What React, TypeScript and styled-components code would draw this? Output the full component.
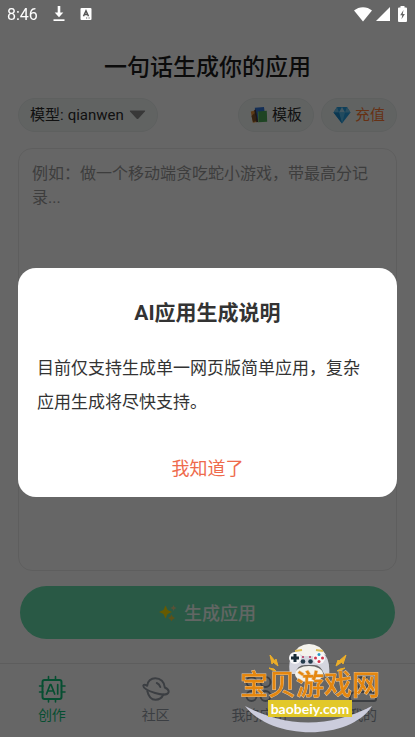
import React from "react";
import styled, { createGlobalStyle } from "styled-components";

const GlobalStyle = createGlobalStyle`
  *, *::before, *::after { box-sizing: border-box; }
  body { margin: 0; background: #fff; font-family: Roboto, "Noto Sans CJK SC", sans-serif; }
  button, select, textarea { font: inherit; color: inherit; }
`;

const Screen = styled.div`
  min-height: 100vh;
  display: flex;
  flex-direction: column;
`;

const StatusBar = styled.header`
  position: relative;
  z-index: 3;
  height: 28px;
  padding: 0 8px 0 7px;
  display: flex;
  align-items: center;
  justify-content: space-between;
  color: #fff;
  font-size: 16px;
`;

const StatusGroup = styled.div<{ $gap: number }>`
  display: flex;
  align-items: center;
  gap: ${(p) => p.$gap}px;
`;

const Clock = styled.time`
  line-height: 28px;
  padding-top: 1px;
`;

const Main = styled.main`
  flex: 1;
  display: flex;
  flex-direction: column;
  padding: 22px 18px 24px;
`;

const PageTitle = styled.h1`
  margin: 0;
  font-size: 23px;
  line-height: 36px;
  font-weight: 500;
  text-align: center;
  color: #1c1c1c;
`;

const Toolbar = styled.div`
  display: flex;
  align-items: center;
  gap: 7px;
  margin: 12px 0 16px;
`;

const chip = `
  height: 34px;
  border: 1px solid #eaf0ee;
  border-radius: 17px;
  background: #f3f8f6;
  font-size: 15px;
  line-height: 22px;
`;

const ModelChip = styled.label`
  ${chip}
  display: flex;
  align-items: center;
  gap: 4px;
  padding: 0 11px;
  margin-right: auto;
  color: #2b2b2b;
`;

const ModelSelect = styled.select`
  appearance: none;
  border: 0;
  padding: 0;
  background: transparent;
  line-height: 22px;
`;

const ChipButton = styled.button<{ $accent?: boolean }>`
  ${chip}
  display: flex;
  align-items: center;
  gap: 4px;
  padding: 0 11px;
  color: ${(p) => (p.$accent ? "#ff7a35" : "#2b2b2b")};
`;

const Prompt = styled.textarea`
  flex: 1;
  width: 100%;
  padding: 13px;
  border: 1px solid #ececec;
  border-radius: 14px;
  background: transparent;
  resize: none;
  outline: none;
  font-size: 16px;
  line-height: 24px;
  &::placeholder { color: #9a9a9a; opacity: 1; }
`;

const GenerateButton = styled.button`
  display: flex;
  align-items: center;
  justify-content: center;
  gap: 7px;
  height: 53px;
  margin: 15px 2px 0;
  padding-bottom: 2px;
  border: 0;
  border-radius: 27px;
  background: #67dfac;
  color: #f4fff9;
  font-size: 18px;
  font-weight: 500;
`;

const TabBar = styled.nav`
  display: grid;
  grid-template-columns: repeat(4, 1fr);
  height: 74px;
  padding-top: 11px;
  border-top: 1px solid #e8e8e8;
`;

const Tab = styled.a<{ $active?: boolean }>`
  display: flex;
  flex-direction: column;
  align-items: center;
  gap: 1px;
  color: ${(p) => (p.$active ? "#10c47c" : "#959ca6")};
  font-size: 14px;
  line-height: 22px;
  text-decoration: none;
`;

const Overlay = styled.div`
  position: fixed;
  inset: 0;
  z-index: 2;
  display: flex;
  align-items: center;
  padding: 28px 18px 0;
  background: rgba(0, 0, 0, 0.6);
`;

const Dialog = styled.section`
  width: 100%;
  padding: 29px 28px 11px 19px;
  border-radius: 18px;
  background: #fff;
  color: #333;
  display: flex;
  flex-direction: column;
`;

const DialogTitle = styled.h2`
  margin: 0 -9px 22px 0;
  font-size: 21px;
  line-height: 32px;
  font-weight: 700;
  text-align: center;
`;

const DialogText = styled.p`
  margin: 0 0 33px;
  font-size: 17px;
  line-height: 34px;
`;

const DialogAction = styled.button`
  margin-right: -9px;
  align-self: center;
  border: 0;
  padding: 0 16px;
  background: transparent;
  color: #ee6a4c;
  font-size: 18px;
  line-height: 34px;
`;

const Watermark = styled.aside`
  position: fixed;
  right: 33px;
  bottom: 4px;
  z-index: 4;
  width: 144px;
  height: 90px;
  padding-top: 29px;
  display: flex;
  flex-direction: column;
  align-items: center;
  pointer-events: none;
`;

const WatermarkArt = styled.svg`
  position: absolute;
  inset: 0;
`;

const WatermarkName = styled.strong`
  position: relative;
  font-size: 28px;
  line-height: 28px;
  font-weight: 500;
  color: #e5870f;
  white-space: nowrap;
  paint-order: stroke;
  -webkit-text-stroke: 1px #eac596;
`;

const WatermarkSite = styled.span`
  position: relative;
  padding: 0 3px;
  background: #e2c829;
  color: #fff;
  font-family: Lato, sans-serif;
  font-weight: 700;
  font-size: 14px;
  line-height: 17px;
`;

const DownloadIcon = () => (
  <svg width="12" height="16" viewBox="0 0 12 16" fill="#fff" aria-hidden="true">
    <path d="M4.700 0h2.600v6.500h3L6 11.200 1.700 6.500h3z" />
    <path d="M.5 13.300h11v1.700H.5z" />
  </svg>
);

const InputIcon = () => (
  <svg width="12" height="12" viewBox="0 0 12 12" aria-hidden="true">
    <rect x=".5" width="11" height="12" rx="1" fill="#fff" />
    <path d="M3.500 8.200 6 2.700l2.500 5.500M4.400 6.500h3.200" fill="none" stroke="#555" strokeWidth="1.500" />
    <path d="M6 10h1.200M8.500 10h1.200" stroke="#666" />
  </svg>
);

const WifiIcon = () => (
  <svg width="18" height="15" viewBox="0 0 18 15" fill="#fff" aria-hidden="true">
    <path d="M0 3.600C5-1 13-1 18 3.600L9 14.600z" />
  </svg>
);

const SignalIcon = () => (
  <svg width="14" height="14" viewBox="0 0 14 14" fill="#fff" aria-hidden="true">
    <path d="M14 0v14H0z" />
  </svg>
);

const BatteryIcon = () => (
  <svg width="9" height="16" viewBox="0 0 9 16" aria-hidden="true">
    <path d="M2.500 0h4v1.500H8q1 0 1 1V15q0 1-1 1H1q-1 0-1-1V2.500q0-1 1-1h1.500z" fill="#fff" />
    <path d="M5.500 4 2.200 9.300h2L3.500 13.300 6.900 8H4.800z" fill="#666" />
  </svg>
);

const CaretIcon = () => (
  <svg width="17" height="10" viewBox="0 0 17 10" aria-hidden="true">
    <path d="M1.500.5h14q1.200 0 .4 1L9.300 8.700q-.8.800-1.600 0L1 1.500q-.6-1 .5-1z" fill="#8d8d8d" />
  </svg>
);

const TemplateIcon = () => (
  <svg width="18" height="18" viewBox="0 0 18 18" aria-hidden="true">
    <path d="m.8 5.500 5-1.200 2.500 11.500-5.500 1z" fill="#e8953a" />
    <path d="m1.500 10 3-3 2 8-3.500 1z" fill="#84552a" />
    <path d="m4.800 1.800 9.200-.9 1.500 12-9.200 1.500z" fill="#3475d8" />
    <path d="m4.200 4 1.600-.4L8.200 16l-1.800.3z" fill="#4a3a38" />
    <path d="m7.800 5.500 9-.8.400 11-8.900.5z" fill="#4dab57" />
    <path d="m7.800 5.500.7-.1.500 10.800h-.7z" fill="#87cb84" />
  </svg>
);

const DiamondIcon = () => (
  <svg width="18" height="18" viewBox="0 0 18 18" aria-hidden="true">
    <path d="M4 1h10l3.500 5.500L9 17.500.5 6.500z" fill="#269fe0" />
    <path d="m4 1 2 5.500H.5zM14 1l-2 5.500h5.500z" fill="#6bc2ee" />
    <path d="m9 1-3 5.500h6z" fill="#a8ddf6" />
    <path d="M6 6.500h6L9 17.500z" fill="#55bced" />
    <path d="M.5 6.500H6l3 11z" fill="#1c8acb" />
  </svg>
);

const SparklesIcon = () => (
  <svg width="18" height="18" viewBox="0 0 18 18" aria-hidden="true">
    <path d="M6.500 2.500 8.500 7l4.500 2-4.500 2-2 4.500-2-4.500L0 9l4.500-2z" fill="#ffe000" />
    <path d="m14.500 2 .9 2.100 2.100.9-2.100.9-.9 2.100-.9-2.100-2.100-.9 2.100-.9z" fill="#e0c88a" />
    <path d="m12.500 11.500 1.200 2.300 2.300 1.200-2.300 1.200-1.200 2.300-1.200-2.300L9 15l2.300-1.200z" fill="#e8c83c" />
  </svg>
);

const tabIcon = {
  width: 28,
  height: 28,
  viewBox: "0 0 28 28",
  fill: "none",
  stroke: "currentColor",
  strokeWidth: 2,
  strokeLinecap: "round" as const,
  strokeLinejoin: "round" as const,
  "aria-hidden": true,
};

const ChipIcon = () => (
  <svg {...tabIcon}>
    <rect x="4.500" y="5" width="19" height="19" rx="2" />
    <path d="M10.500 1.500V5M17.500 1.500V5M10.500 24v3M17.500 24v3M1.500 11H5M1.500 17H5M23.500 11H27M23.500 17H27" strokeWidth="1.600" />
    <path d="m8.500 19 3.700-9.500h.8l3.700 9.500M10 16h5.200M19.700 9.500V19" strokeWidth="1.700" />
  </svg>
);

const PlanetIcon = () => (
  <svg {...tabIcon}>
    <path d="M5.200 10.800C5.400 6.200 9 3.200 13.300 3.200c5.200 0 9.200 3.700 9.500 9.300 2.900 1.400 4.300 3.100 3.700 4.900-1 2.700-6.800 2.700-13.400.6C6.300 15.800.9 13.100 1.300 10.600c.2-1.100 1.600-1.200 3.900.2" />
    <path d="M5.300 16c1.200 5.500 4 8.700 8.200 8.700 3.500 0 6.500-2 7.800-5.200M14.800 8q2.500.8 3.500 4" />
  </svg>
);

const AppsIcon = () => (
  <svg {...tabIcon}>
    <circle cx="6.500" cy="7" r="5" />
    <circle cx="20.500" cy="7" r="5" />
    <circle cx="6.500" cy="21" r="5" />
    <circle cx="20.500" cy="21" r="5" />
  </svg>
);

const PersonIcon = () => (
  <svg {...tabIcon}>
    <circle cx="14" cy="8" r="6" />
    <path d="M7 17h14q6 0 6 6v1q0 2-2 2H3q-2 0-2-2v-1q0-6 6-6z" />
  </svg>
);

const WatermarkDrawing = () => (
  <WatermarkArt width="144" height="90" viewBox="0 0 144 90" aria-hidden="true">
    <path d="M7 63q63 33 127 0C112 98 34 98 7 63z" fill="#cbccdc" />
    <path d="M52 31q-3-16 6-22Q71-6 84 9q9 6 7 25l-5-3q-3-9-10-9H67q-8 0-10 9z" fill="#d5d6df" />
    <path d="M55 12Q60 1 71 1t17 11l-7-2-5 3H65l-5-3z" fill="#f4f2ec" />
    <ellipse cx="71" cy="31" rx="14" ry="8" fill="#f4f2eb" />
    <path d="m57 8 7-1M78 7l7 1" stroke="#dfbd54" strokeWidth="2" />
    <circle cx="57" cy="15" r="6" fill="#f7f7f8" />
    <circle cx="81" cy="15" r="6" fill="#f7f7f8" />
    <path d="M57 11v8M53 15h8" stroke="#172a36" strokeWidth="3" />
    <circle cx="81" cy="11.500" r="1.500" fill="#249bc7" />
    <circle cx="77.500" cy="15" r="1.500" fill="#d3344b" />
    <circle cx="84.500" cy="15" r="1.500" fill="#d3344b" />
    <circle cx="81" cy="18.500" r="1.500" fill="#d3344b" />
    <path d="M64 14h2M71 14h2" stroke="#b62d59" strokeWidth="1.500" />
    <circle cx="65" cy="18.500" r="2.300" fill="#243c4c" />
    <circle cx="72.500" cy="18.500" r="2.300" fill="#243c4c" />
    <path d="m32 12 5 6 1-2 2 7-5-4-1 2zM108 12l-7 6-1-1-2 6 6-4 1 2zM31 25l5 1 2 2-4-1zM107 25l-5 1-3 2 5-1z" fill="#edae28" stroke="#edae28" />
  </WatermarkArt>
);

export default function App() {
  const [open, setOpen] = React.useState(true);
  return (
    <Screen>
      <GlobalStyle />
      <StatusBar>
        <StatusGroup $gap={15}>
          <Clock>8:46</Clock>
          <DownloadIcon />
          <InputIcon />
        </StatusGroup>
        <StatusGroup $gap={8}>
          <StatusGroup $gap={4}>
            <WifiIcon />
            <SignalIcon />
          </StatusGroup>
          <BatteryIcon />
        </StatusGroup>
      </StatusBar>

      <Main>
        <PageTitle>一句话生成你的应用</PageTitle>
        <Toolbar>
          <ModelChip>
            模型:
            <ModelSelect defaultValue="qianwen">
              <option value="qianwen">qianwen</option>
            </ModelSelect>
            <CaretIcon />
          </ModelChip>
          <ChipButton type="button"><TemplateIcon />模板</ChipButton>
          <ChipButton type="button" $accent><DiamondIcon />充值</ChipButton>
        </Toolbar>
        <Prompt aria-label="应用描述" placeholder="例如：做一个移动端贪吃蛇小游戏，带最高分记录..." />
        <GenerateButton type="button"><SparklesIcon />生成应用</GenerateButton>
      </Main>

      <TabBar>
        <Tab href="#create" $active><ChipIcon />创作</Tab>
        <Tab href="#community"><PlanetIcon />社区</Tab>
        <Tab href="#apps"><AppsIcon />我的应用</Tab>
        <Tab href="#me"><PersonIcon />我的</Tab>
      </TabBar>

      {open && (
        <Overlay>
          <Dialog role="dialog" aria-modal="true" aria-labelledby="notice-title">
            <DialogTitle id="notice-title">AI应用生成说明</DialogTitle>
            <DialogText>目前仅支持生成单一网页版简单应用，复杂应用生成将尽快支持。</DialogText>
            <DialogAction type="button" onClick={() => setOpen(false)}>我知道了</DialogAction>
          </Dialog>
        </Overlay>
      )}

      <Watermark>
        <WatermarkDrawing />
        <WatermarkName>宝贝游戏网</WatermarkName>
        <WatermarkSite>baobeiy.com</WatermarkSite>
      </Watermark>
    </Screen>
  );
}
